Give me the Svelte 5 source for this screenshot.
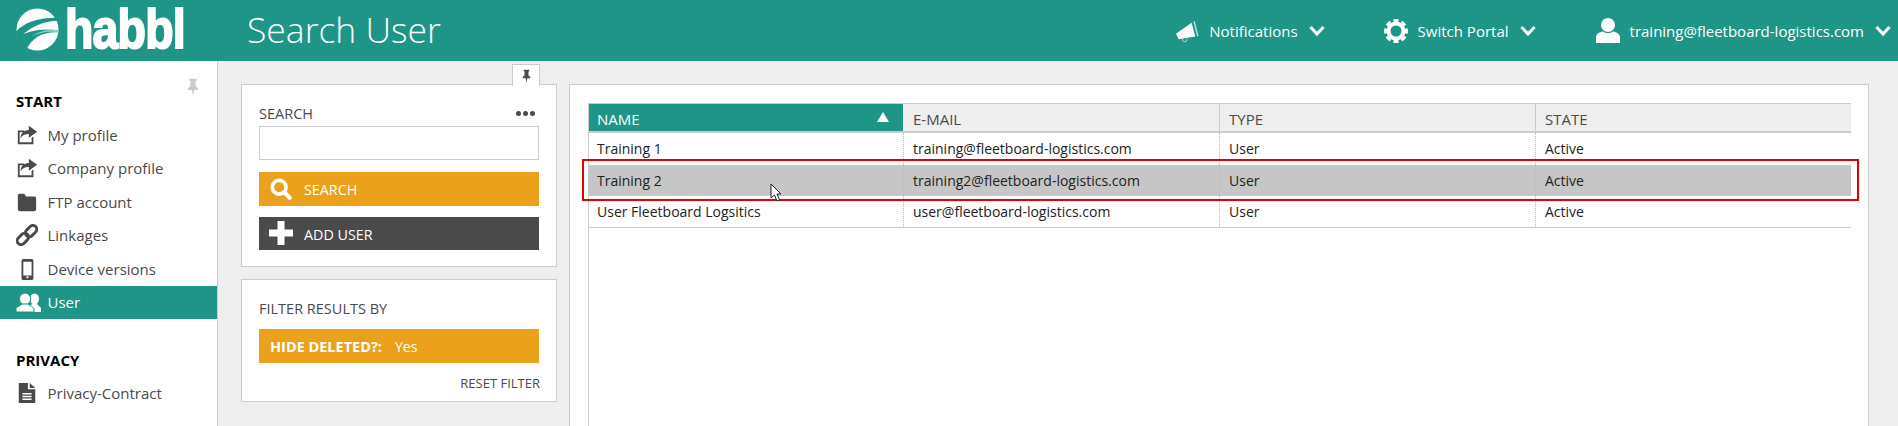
<script>
  const startItems = [
    { label: "My profile", icon: "share" },
    { label: "Company profile", icon: "share" },
    { label: "FTP account", icon: "folder" },
    { label: "Linkages", icon: "link" },
    { label: "Device versions", icon: "mobile" },
    { label: "User", icon: "users", active: true },
  ];

  const rows = [
    { name: "Training 1", email: "training@fleetboard-logistics.com" },
    { name: "Training 2", email: "training2@fleetboard-logistics.com", selected: true },
    { name: "User Fleetboard Logsitics", email: "user@fleetboard-logistics.com" },
  ];
</script>

{#snippet icon(name)}
  {#if name === "users"}
    <svg class="icon users" viewBox="0 0 25 19">
      <ellipse cx="18.500" cy="6" rx="4.500" ry="5.500" />
      <path d="M14 19v-6l2-2h5l4 4v4z" />
      <ellipse cx="9" cy="6" rx="5.500" ry="6" stroke="#1e9587" stroke-width="1" />
      <path d="M0 19v-3c0-2 4-3 6-5h6c2 2 6 3 6 5v3z" stroke="#1e9587" stroke-width="1" />
    </svg>
  {:else}
    <svg class="icon" viewBox="0 0 24 24">
      {#if name === "share"}
        <path d="M2 7h7v2H4v11h13v-5l2-1.500V22H2z" />
        <path d="M14 2l9 6.500-9 6.500v-4c-4 0-7 1-9 5 0-6 3-9 9-9.500z" />
      {:else if name === "folder"}
        <path d="M2 5a2 2 0 0 1 2-2h5l2 3h9a2 2 0 0 1 2 2v12a2 2 0 0 1-2 2H4a2 2 0 0 1-2-2z" />
      {:else if name === "link"}
        <g fill="none" stroke="currentColor" stroke-width="3.200">
          <rect x="0.500" y="12" width="14" height="8.500" rx="4.250" transform="rotate(-45 7.500 16.250)" />
          <rect x="9.500" y="3.500" width="14" height="8.500" rx="4.250" transform="rotate(-45 16.500 7.750)" />
        </g>
      {:else if name === "mobile"}
        <path fill-rule="evenodd" d="M8 1h9a2 2 0 0 1 2 2v19a2 2 0 0 1-2 2H8a2 2 0 0 1-2-2V3a2 2 0 0 1 2-2zM8 4v15h9V4zM11.500 20h2v2h-2z" />
      {:else if name === "file"}
        <path d="M3 1h10v7h8v15H3z" />
        <path d="M15 1l6 5.500h-6z" />
        <path d="M7 12h10v1.500H7zM7 15h10v1.500H7zM7 18h10v1.500H7z" fill="#fff" />
      {/if}
    </svg>
  {/if}
{/snippet}

{#snippet pin(cls)}
  <svg class={cls} viewBox="0 0 16 24">
    <path d="M3 1h10v2l-1.500 1v7c2 1 3.500 2.500 3.500 5H9.500L8 24l-1.500-8H1c0-2.500 1.500-4 3.500-5V4L3 3z" />
  </svg>
{/snippet}

{#snippet chevron()}
  <svg class="chevron" viewBox="0 0 16 12">
    <path d="M1.500 2l6.500 7 6.500-7" fill="none" stroke="currentColor" stroke-width="3" />
  </svg>
{/snippet}

<div class="page">
  <header class="topbar">
    <div class="logo">
      <svg class="ball" viewBox="0 0 44 44">
        <circle cx="22" cy="22" r="21.500" fill="#fff" />
        <path d="M0 24C8 15 24 9 44 10v3C28 13 12 20 1 33z" fill="#1e9587" />
        <path d="M0 30C10 24 28 20 44 23v2C28 24 16 30 10 44H0z" fill="#1e9587" />
        <path d="M16 29c8-4 18-6 28-4v-2c-10-2-20 1-28 6z" fill="#8fcbc3" />
      </svg>
      <span class="wordmark">habbl</span>
    </div>
    <h1>Search User</h1>
    <nav class="topnav">
      <a class="notifications">
        <svg class="top-icon" viewBox="0 0 26 24">
          <path d="M1 15L18 3l4 15-18 3z" />
          <path d="M20 2l1.500-.5 4 16-1.500.5z" opacity=".7" />
          <path d="M8 20.500c0 2 1 3 2.500 3s2.500-1 2.500-3.500" fill="none" stroke="currentColor" stroke-width="1" opacity=".7" />
        </svg>
        <span>Notifications</span>
        {@render chevron()}
      </a>
      <a class="portal">
        <svg class="top-icon" viewBox="0 0 24 24">
          <circle cx="12" cy="12" r="7.500" fill="none" stroke="currentColor" stroke-width="4" />
          <circle cx="12" cy="12" r="10.200" fill="none" stroke="currentColor" stroke-width="3.600" stroke-dasharray="5 3" stroke-dashoffset="2.500" pathLength="64" />
        </svg>
        <span>Switch Portal</span>
        {@render chevron()}
      </a>
      <a class="account">
        <svg class="top-icon user-icon" viewBox="0 0 24 25">
          <ellipse cx="12" cy="7" rx="7" ry="7" />
          <path d="M0 25v-5c0-4 3-6 7-6.500 3 2 7 2 10 0 4 .500 7 2.500 7 6.500v5z" />
        </svg>
        <span>training@fleetboard-logistics.com</span>
        {@render chevron()}
      </a>
    </nav>
  </header>

  <div class="body">
    <aside class="sidebar">
      <div class="sidebar-pin">{@render pin("pin-grey")}</div>
      <h2>START</h2>
      <ul>
        {#each startItems as item}
          <li class:active={item.active}>{@render icon(item.icon)}<span>{item.label}</span></li>
        {/each}
      </ul>
      <h2 class="privacy">PRIVACY</h2>
      <ul>
        <li>{@render icon("file")}<span>Privacy-Contract</span></li>
      </ul>
    </aside>

    <main class="content">
      <div class="filters">
        <section class="panel search-panel">
          <div class="pin-tab">{@render pin("pin-dark")}</div>
          <div class="label-row">
            <span>SEARCH</span>
            <span class="dots"><i></i><i></i><i></i></span>
          </div>
          <input type="text" />
          <button class="btn orange">
            <svg class="btn-icon" viewBox="0 0 24 24">
              <circle cx="10" cy="10" r="7.500" fill="none" stroke="#fff" stroke-width="4" />
              <path d="M15.500 15.500l6 6" stroke="#fff" stroke-width="4.500" stroke-linecap="round" />
            </svg>
            <span>SEARCH</span>
          </button>
          <button class="btn dark">
            <svg class="btn-icon plus" viewBox="0 0 24 24">
              <path d="M8.500 0h7v8.500H24v7h-8.500V24h-7v-8.500H0v-7h8.500z" fill="#fff" />
            </svg>
            <span>ADD USER</span>
          </button>
        </section>

        <section class="panel filter-panel">
          <div class="filter-title">FILTER RESULTS BY</div>
          <div class="chip"><b>HIDE DELETED?:</b><span>Yes</span></div>
          <div class="reset">RESET FILTER</div>
        </section>
      </div>

      <section class="results">
        <div class="table">
          <div class="row head">
            <div class="cell sorted">NAME<span class="arrow"></span></div>
            <div class="cell">E-MAIL</div>
            <div class="cell">TYPE</div>
            <div class="cell">STATE</div>
          </div>
          {#each rows as row}
            <div class="row" class:selected={row.selected}>
              <div class="cell">{row.name}</div>
              <div class="cell">{row.email}</div>
              <div class="cell">User</div>
              <div class="cell">Active</div>
            </div>
          {/each}
        </div>
        <div class="highlight"></div>
        <svg class="cursor" viewBox="0 0 12 19">
          <path d="M1 1v14l3.500-3 2.500 6 2.500-1-2.500-6H11z" fill="#fff" stroke="#222" stroke-width="1" />
        </svg>
      </section>
    </main>
  </div>
</div>

<style>
  :global(body) {
    margin: 0;
    background: #eee;
  }

  .page {
    height: 426px;
    overflow: hidden;
    font-family: "Open Sans", "Noto Sans", sans-serif;
    font-size: 14px;
    color: #4a4a4a;
    display: flex;
    flex-direction: column;
  }

  .topbar {
    height: 61px;
    flex: none;
    background: #1e9587;
    color: #fff;
    display: flex;
    align-items: center;
  }

  .logo {
    width: 247px;
    flex: none;
    display: flex;
    align-items: center;
    padding-left: 16px;
    box-sizing: border-box;
    height: 61px;
  }

  .ball {
    width: 43px;
    height: 43px;
    margin-top: -3px;
  }

  .wordmark {
    font-family: "Liberation Sans", sans-serif;
    font-weight: 700;
    font-size: 56px;
    line-height: 61px;
    margin-left: 6px;
    margin-top: -4px;
    transform: scaleX(0.83);
    transform-origin: left center;
    -webkit-text-stroke: 2px #fff;
    letter-spacing: -1px;
  }

  h1 {
    margin: 0;
    font-weight: 300;
    font-size: 35.500px;
    line-height: 1;
    margin-top: -1px;
  }

  .topnav {
    margin-left: auto;
    display: flex;
    align-items: center;
    font-size: 15px;
    padding-right: 7px;
  }

  .topnav a {
    display: flex;
    align-items: center;
  }

  .portal {
    margin-left: 59px;
  }

  .account {
    margin-left: 60px;
  }

  .top-icon {
    width: 24px;
    height: 24px;
    margin-right: 10px;
    fill: currentColor;
  }

  .user-icon {
    height: 25px;
  }

  .chevron {
    width: 16px;
    height: 12px;
    margin-left: 11px;
  }

  .body {
    flex: 1;
    display: flex;
    min-height: 0;
  }

  .sidebar {
    width: 217px;
    flex: none;
    background: #fff;
    border-right: 1px solid #ccc;
    padding-top: 30px;
    position: relative;
  }

  .sidebar-pin {
    position: absolute;
    top: 17px;
    left: 187px;
  }

  .pin-grey {
    display: block;
    width: 12px;
    height: 18px;
    fill: #ccc;
  }

  h2 {
    margin: 0 0 0 16px;
    font-size: 15px;
    line-height: 20px;
    font-weight: 700;
    color: #000;
  }

  .privacy {
    margin-top: 30.500px;
  }

  ul {
    list-style: none;
    margin: 7px 0 0;
    padding: 0;
  }

  li {
    height: 33.500px;
    display: flex;
    align-items: center;
    padding-left: 16px;
    font-size: 15px;
  }

  li.active {
    background: #1e9587;
    color: #fff;
  }

  .icon {
    width: 22px;
    height: 22px;
    margin-right: 9.500px;
    fill: currentColor;
    flex: none;
  }

  .users {
    width: 25px;
    height: 19px;
    margin-right: 6.500px;
  }

  .content {
    flex: 1;
    display: flex;
    gap: 12px;
    padding: 23px 29px 0 23px;
    min-width: 0;
  }

  .filters {
    width: 316px;
    flex: none;
    display: flex;
    flex-direction: column;
    gap: 12px;
  }

  .panel {
    background: #fff;
    border: 1px solid #ccc;
    box-sizing: border-box;
    padding: 0 17px;
    position: relative;
  }

  .search-panel {
    height: 183px;
    padding-top: 18px;
  }

  .pin-tab {
    position: absolute;
    top: -21px;
    right: 16px;
    width: 26px;
    height: 21px;
    background: #fff;
    border: 1px solid #ccc;
    border-bottom: none;
    display: flex;
    justify-content: center;
    align-items: center;
  }

  .pin-dark {
    width: 9px;
    height: 14px;
    fill: #4a4a4a;
  }

  .label-row {
    display: flex;
    justify-content: space-between;
    align-items: center;
    height: 20px;
    margin-bottom: 3px;
    font-size: 14.500px;
  }

  .dots {
    display: flex;
    gap: 2px;
    margin-right: 4px;
  }

  .dots i {
    width: 5px;
    height: 5px;
    border-radius: 50%;
    background: #4a4a4a;
  }

  input {
    display: block;
    width: 100%;
    height: 34px;
    box-sizing: border-box;
    border: 1px solid #ccc;
    margin: 0;
    padding: 0;
    outline: none;
  }

  .btn {
    display: flex;
    align-items: center;
    width: 100%;
    height: 33.500px;
    border: none;
    margin: 11px 0 0;
    padding: 0 0 0 11px;
    color: #fff;
    font-family: inherit;
    font-size: 14.300px;
    text-align: left;
  }

  .btn span {
    padding-top: 2px;
  }

  .orange {
    background: #eba11c;
    margin-top: 12px;
  }

  .dark {
    background: #4a4a4a;
  }

  .btn-icon {
    width: 22px;
    height: 22px;
    margin-right: 12px;
  }

  .plus {
    margin-left: -1px;
    width: 24px;
    height: 24px;
    margin-right: 11px;
  }

  .filter-panel {
    height: 123px;
    padding-top: 18px;
  }

  .filter-title {
    line-height: 20px;
    font-size: 14.500px;
    padding-top: 1px;
  }

  .chip {
    background: #eba11c;
    color: #fff;
    height: 34px;
    margin-top: 10px;
    padding-left: 11px;
    display: flex;
    align-items: center;
    gap: 13px;
    box-sizing: border-box;
    padding-top: 1px;
  }

  .chip b {
    font-size: 14.500px;
  }

  .reset {
    text-align: right;
    font-size: 13px;
    margin-right: -1px;
    margin-top: 11px;
    line-height: 18px;
  }

  .results {
    flex: 1;
    background: #fff;
    border: 1px solid #ccc;
    border-bottom: none;
    padding: 18px 17px 0 18px;
    position: relative;
    min-width: 0;
  }

  .table {
    border-left: 1px solid #ccc;
    height: 400px;
  }

  .row {
    display: grid;
    grid-template-columns: 315px 316px 316px 1fr;
    height: 31.500px;
    box-sizing: border-box;
    align-items: stretch;
    color: #222;
  }

  .row:last-child {
    border-bottom: 1px solid #ccc;
  }

  .cell {
    display: flex;
    align-items: center;
    padding-left: 9px;
    border-right: 1px dotted #bbb;
    position: relative;
    min-width: 0;
  }

  .cell:first-child {
    padding-left: 8px;
  }

  .cell:last-child {
    border-right: none;
  }

  .head {
    height: 30px;
    background: #eee;
    border-top: 1px solid #ccc;
    border-bottom: 2px solid #ccc;
    color: #4a4a4a;
    font-size: 15px;
  }

  .head .cell {
    border-right: 1px solid #ccc;
    padding-top: 2px;
  }

  .head .cell:last-child {
    border-right: none;
  }

  .head .sorted {
    background: #1e9587;
    color: #fff;
    border-right: 1px solid #fff;
  }

  .arrow {
    position: absolute;
    right: 14px;
    top: 8px;
    width: 0;
    height: 0;
    border-left: 6px solid transparent;
    border-right: 6px solid transparent;
    border-bottom: 10px solid #fff;
  }

  .selected {
    background: #c6c6c6;
  }

  .highlight {
    position: absolute;
    left: 12px;
    top: 74px;
    width: 1273px;
    height: 38px;
    border: 2px solid #e60000;
    box-sizing: content-box;
    pointer-events: none;
  }

  .cursor {
    position: absolute;
    left: 200px;
    top: 98px;
    width: 12px;
    height: 19px;
  }
</style>
